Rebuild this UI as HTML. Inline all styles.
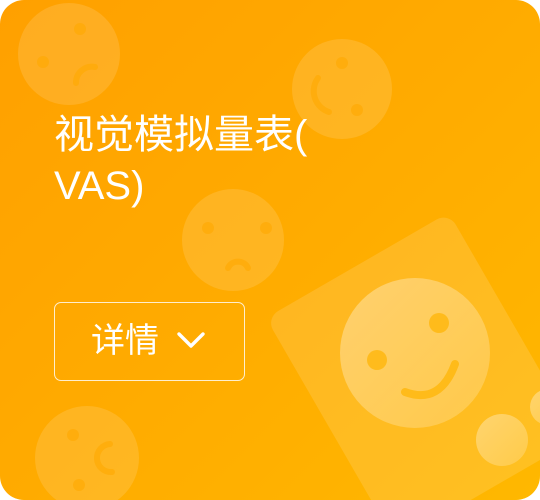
<!DOCTYPE html>
<html><head><meta charset="utf-8"><style>
html,body{margin:0;padding:0;background:#fff;width:540px;height:500px;overflow:hidden;}
.card{position:relative;width:540px;height:500px;border-radius:24px;overflow:hidden;background:linear-gradient(135deg,#FFA000 0%,#FFAB00 50%,#FFB800 100%);}
svg{position:absolute;left:0;top:0;}
.title{position:absolute;left:54px;top:110px;color:#fff;font-family:"Liberation Sans","Noto Sans CJK SC",sans-serif;font-size:40px;line-height:51px;}
.btn{position:absolute;left:54px;top:302px;width:189px;height:77px;border:1.5px solid rgba(255,255,255,0.8);border-radius:7px;color:#fff;font-family:"Liberation Sans","Noto Sans CJK SC",sans-serif;font-size:34px;}
.btn span{position:absolute;left:36px;top:19px;line-height:38px;}
</style></head><body>
<div class="card">
<svg width="540" height="500" viewBox="0 0 540 500">
<defs>
<linearGradient id="g" x1="0" y1="0" x2="1" y2="1"><stop offset="0" stop-color="#fff" stop-opacity="0.35"/><stop offset="1" stop-color="#fff" stop-opacity="0.18"/></linearGradient>
</defs>
<g fill="#fff" fill-opacity="0.13">
<circle cx="69" cy="54" r="51"/>
<circle cx="342" cy="89" r="50"/>
<circle cx="233" cy="240" r="51"/>
<circle cx="87" cy="458" r="52"/>
<rect x="0" y="0" width="211" height="260" rx="14" transform="translate(266,318) rotate(-30)"/>
</g>
<g fill="#FFA800" fill-opacity="0.6">
<circle cx="80" cy="29" r="6"/><circle cx="43" cy="62" r="6"/>
<circle cx="342" cy="63" r="6"/><circle cx="357" cy="110" r="6"/>
<circle cx="208" cy="228" r="6"/><circle cx="266" cy="228" r="6"/>
<circle cx="73" cy="435" r="6"/><circle cx="79" cy="485" r="6"/>
</g>
<g fill="none" stroke="#FFA800" stroke-opacity="0.6" stroke-width="6" stroke-linecap="round">
<path d="M95 67 A16 16 0 0 0 76 83"/>
<path d="M318 78 A22 22 0 0 0 329 112"/>
<path d="M228 268 A11 11 0 0 1 248 268"/>
<path d="M110 444 A14 14 0 0 0 112 472"/>
</g>
<circle cx="415" cy="353" r="75" fill="url(#g)"/>
<circle cx="377" cy="360" r="10" fill="#FFB300" fill-opacity="0.7"/>
<circle cx="439" cy="323" r="10" fill="#FFB300" fill-opacity="0.7"/>
<path d="M405 392 Q440 405 455 364" fill="none" stroke="#FFB300" stroke-opacity="0.7" stroke-width="8" stroke-linecap="round"/>
<circle cx="502" cy="440" r="26" fill="url(#g)"/>
<circle cx="548" cy="407" r="18" fill="url(#g)"/>
</svg>
<div class="title">视觉模拟量表(<br>VAS)</div>
<div class="btn"><span>详情</span>
<svg style="left:121px;top:28px" width="32" height="20" viewBox="0 0 32 20"><path d="M3 3 L15 15 L27 3" fill="none" stroke="#fff" stroke-width="3.4" stroke-linecap="round" stroke-linejoin="round"/></svg>
</div>
</div>
</body></html>
